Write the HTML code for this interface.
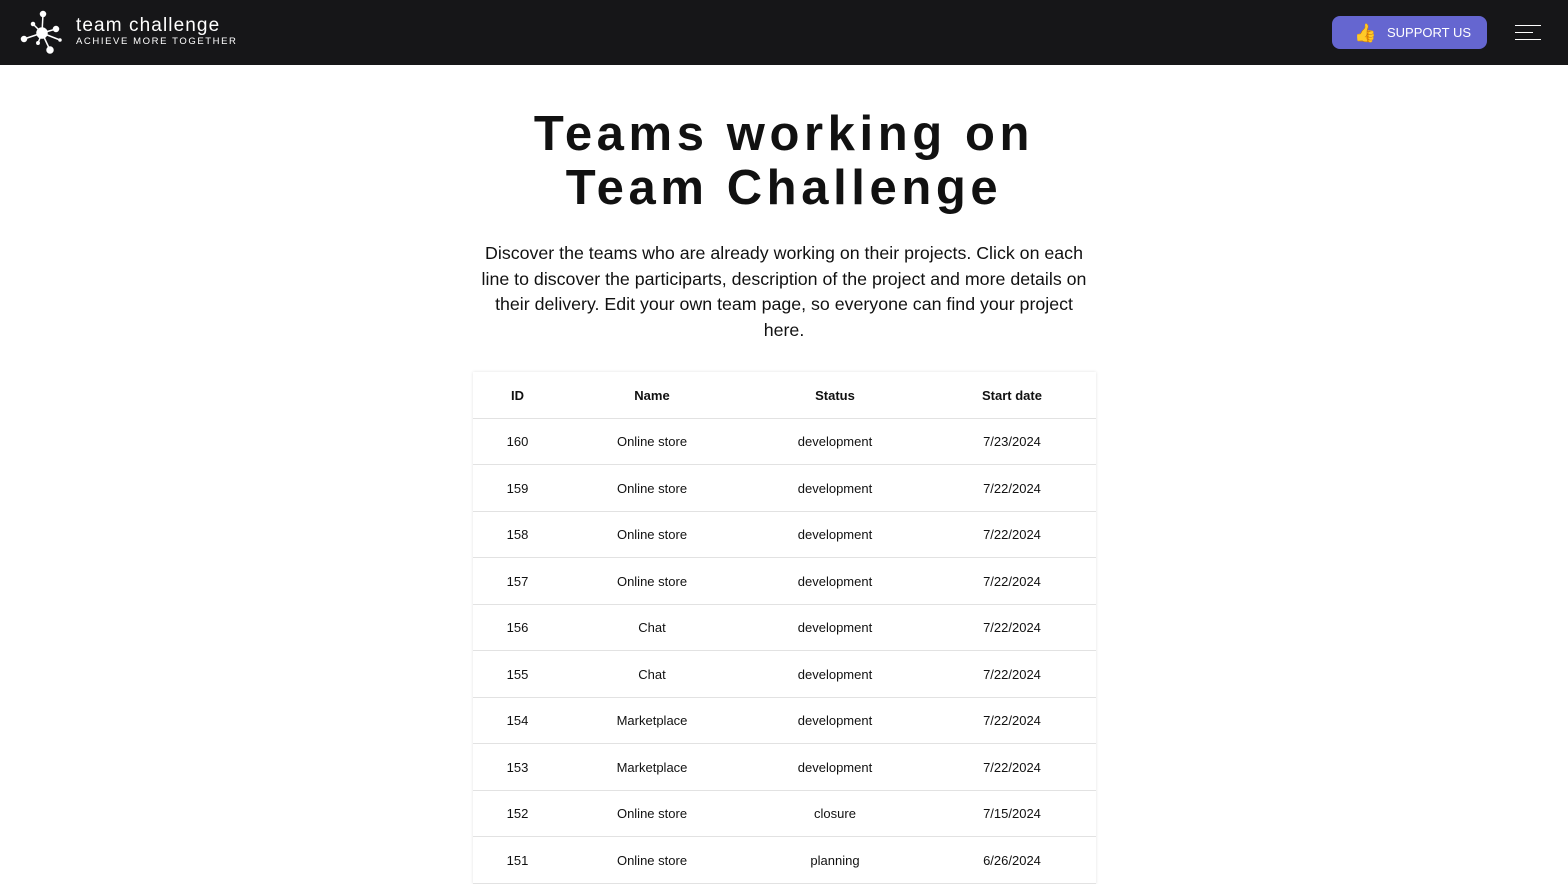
<!DOCTYPE html>
<html><head><meta charset="utf-8"><style>
*{box-sizing:border-box;margin:0;padding:0}
body{width:1568px;height:882px;overflow:hidden;background:#fff;font-family:"Liberation Sans",sans-serif;color:#111}
.nav{height:65px;background:#161618;position:relative}
.logo{position:absolute;left:20px;top:9px}
.brand{position:absolute;left:76px;top:16px;color:#fff}
.brand .t{font-size:19px;letter-spacing:1.1px;line-height:20px}
.brand .s{font-size:9.5px;letter-spacing:1.6px;line-height:12px}
.btn{position:absolute;left:1332px;top:16px;width:155px;height:33px;background:#6566d0;border-radius:8px;color:#fff;font-size:13px;line-height:33px;padding-left:55px}
.thumb{position:absolute;left:22px;top:7px;font-size:18px;line-height:20px}
.burger{position:absolute;left:1515px;top:25px;width:26px}
.burger div{height:1px;background:#fff;margin-bottom:6px}
h1{text-align:center;font-size:49px;letter-spacing:4.6px;line-height:54px;margin-top:42px;font-weight:bold}
p.d{width:620px;margin:26px auto 0;text-align:center;font-size:17.8px;line-height:25.6px}
table{margin:29px 0 0 473px;width:623px;border-collapse:collapse;font-size:13px;box-shadow:0 0 3px rgba(0,0,0,.12)}
th,td{text-align:center;border-bottom:1px solid #e2e2e2;height:46.5px}
th{font-weight:bold;height:46px}
</style></head><body>
<div class="nav">
<svg class="logo" width="46" height="46" viewBox="0 0 46 46">
<g stroke="#fff" stroke-width="1.5" fill="#fff">
<line x1="22" y1="24" x2="23" y2="5"/><line x1="22" y1="24" x2="36" y2="20"/><line x1="22" y1="24" x2="4" y2="30"/><line x1="22" y1="24" x2="30" y2="41"/><line x1="22" y1="24" x2="13" y2="15"/><line x1="22" y1="24" x2="40" y2="31"/><line x1="22" y1="24" x2="18" y2="34"/>
<circle cx="22" cy="24" r="5"/><circle cx="23" cy="5" r="2.5"/><circle cx="36" cy="20" r="2.5"/><circle cx="4" cy="30" r="2.5"/><circle cx="30" cy="41" r="3"/><circle cx="13" cy="15" r="1.5"/><circle cx="40" cy="31" r="1"/><circle cx="18" cy="34" r="1.2"/>
</g></svg>
<div class="brand"><div class="t">team challenge</div><div class="s">ACHIEVE MORE TOGETHER</div></div>
<div class="btn"><span class="thumb">👍</span>SUPPORT US</div>
<div class="burger"><div></div><div style="width:18px"></div><div></div></div>
</div>
<h1>Teams working on<br>Team Challenge</h1>
<p class="d">Discover the teams who are already working on their projects. Click on each line to discover the participarts, description of the project and more details on their delivery. Edit your own team page, so everyone can find your project here.</p>
<table>
<colgroup><col style="width:89px"><col style="width:180px"><col style="width:186px"><col style="width:168px"></colgroup>
<tr><th>ID</th><th>Name</th><th>Status</th><th>Start date</th></tr>
<tr><td>160</td><td>Online store</td><td>development</td><td>7/23/2024</td></tr>
<tr><td>159</td><td>Online store</td><td>development</td><td>7/22/2024</td></tr>
<tr><td>158</td><td>Online store</td><td>development</td><td>7/22/2024</td></tr>
<tr><td>157</td><td>Online store</td><td>development</td><td>7/22/2024</td></tr>
<tr><td>156</td><td>Chat</td><td>development</td><td>7/22/2024</td></tr>
<tr><td>155</td><td>Chat</td><td>development</td><td>7/22/2024</td></tr>
<tr><td>154</td><td>Marketplace</td><td>development</td><td>7/22/2024</td></tr>
<tr><td>153</td><td>Marketplace</td><td>development</td><td>7/22/2024</td></tr>
<tr><td>152</td><td>Online store</td><td>closure</td><td>7/15/2024</td></tr>
<tr><td>151</td><td>Online store</td><td>planning</td><td>6/26/2024</td></tr>
</table>
</body></html>
